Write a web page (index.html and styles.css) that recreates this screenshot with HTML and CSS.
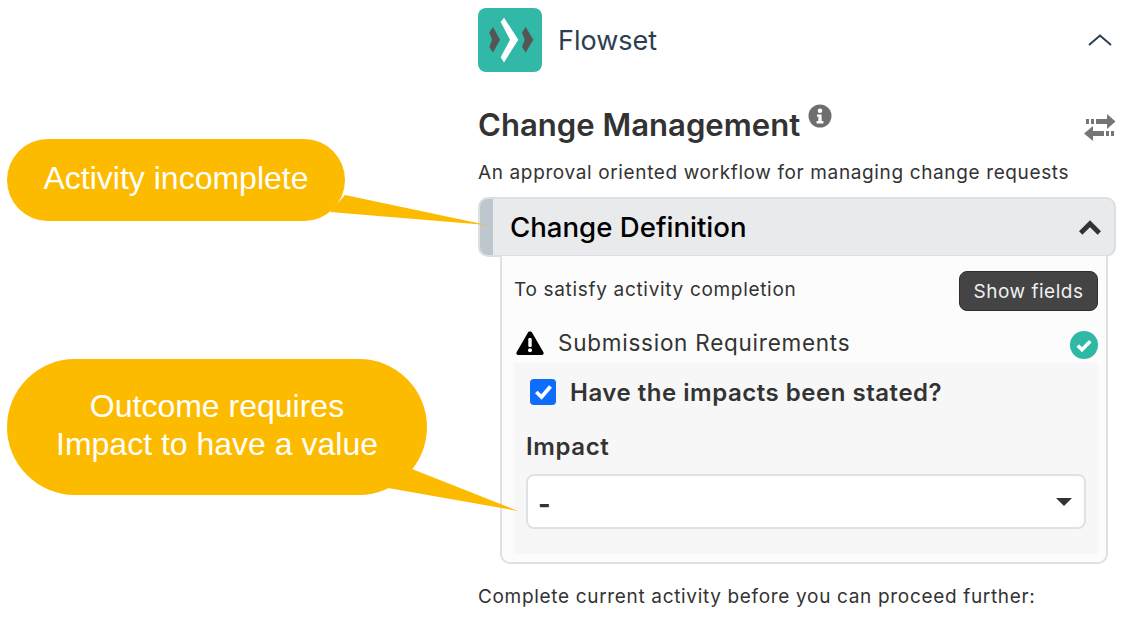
FILE: index.html
```html
<!DOCTYPE html>
<html lang="en">
<head>
<meta charset="utf-8">
<title>Flowset</title>
<link rel="stylesheet" href="styles.css">
</head>
<body>
<main class="panel">
  <header class="brand">
    <svg class="logo" viewBox="0 0 64 64" aria-hidden="true">
      <rect width="64" height="64" rx="8" fill="#31b8a6"/>
      <polygon points="15,19 22,31.700 15,44.500 11.300,39 14,31.700 11.300,24.500" fill="#555"/>
      <polygon points="22.700,14 26,9.700 40.300,31.700 26,54.500 22.700,49.300 32,31.700" fill="#fff"/>
      <polygon points="47.700,19 55.300,31.700 47.700,44.500 44,39 46.700,31.700 44,24.500" fill="#555"/>
    </svg>
    <span class="brand-name">Flowset</span>
    <svg class="collapse" viewBox="0 0 24 12" aria-hidden="true"><path d="M1 11 12 1.500 23 11" fill="none" stroke="#2c3e50" stroke-width="2"/></svg>
  </header>

  <div class="title-row">
    <h1 class="title">Change Management</h1>
    <svg class="info" viewBox="0 0 24 24" aria-hidden="true">
      <circle cx="12" cy="12" r="11.500" fill="#6e6e6e"/>
      <circle cx="12" cy="6.800" r="2.300" fill="#fff"/>
      <path d="M9 10.500h4.600v6.600H15.400v2.300H8.600v-2.300h1.800v-4.300H9z" fill="#fff"/>
    </svg>
    <svg class="swap" viewBox="0 0 32 28" aria-hidden="true">
      <g fill="#757575">
        <rect x="2" y="6" width="3" height="5"/><rect x="7" y="6" width="3" height="5"/>
        <polygon points="12,6 23,6 23,1 31.500,8.500 23,16 23,11 12,11"/>
        <polygon points="0,20.500 9,13 9,18 20,18 20,23 9,23 9,28"/>
        <rect x="22" y="18" width="3" height="5"/><rect x="27" y="18" width="3" height="5"/>
      </g>
    </svg>
  </div>
  <p class="desc">An approval oriented workflow for managing change requests</p>

  <div class="activity-head">
    <span class="activity-band"></span>
    <h2 class="activity-name">Change Definition</h2>
    <svg class="activity-toggle" viewBox="0 0 22 15" aria-hidden="true"><path d="M1.700 13 11 3.700 20.300 13" fill="none" stroke="#333" stroke-width="4.800"/></svg>
  </div>

  <section class="activity-body">
    <div class="satisfy-row">
      <span>To satisfy activity completion</span>
      <button class="show-fields" type="button">Show fields</button>
    </div>
    <div class="req-row">
      <svg class="warn" viewBox="0 0 28 24" aria-hidden="true">
        <path d="M14 .5c1 0 1.800.5 2.300 1.400l11 19.200c.9 1.500-.2 2.900-1.800 2.900H2.500C.9 24-.2 22.600.7 21.100l11-19.200C12.200 1 13 .5 14 .5z" fill="#000"/>
        <rect x="12.300" y="7" width="3.400" height="9" rx="1" fill="#fff"/>
        <circle cx="14" cy="19.300" r="2" fill="#fff"/>
      </svg>
      <span class="req-name">Submission Requirements</span>
      <svg class="ok" viewBox="0 0 28 28" aria-hidden="true">
        <circle cx="14" cy="14" r="14" fill="#2fb8a6"/>
        <path d="M7.800 14.500l4.200 4.200 8.300-8.400" fill="none" stroke="#fff" stroke-width="3.600"/>
      </svg>
    </div>
    <div class="fields">
      <label class="check-row">
        <span class="checkbox"><svg viewBox="0 0 26 26" aria-hidden="true"><path d="M6.300 13 11.500 18 20.500 7.500" fill="none" stroke="#fff" stroke-width="3.800"/></svg></span>
        <span class="check-text">Have the impacts been stated?</span>
      </label>
      <div class="field-label">Impact</div>
      <div class="select">
        <span class="select-value">-</span>
        <span class="caret"></span>
      </div>
    </div>
  </section>

  <p class="footnote">Complete current activity before you can proceed further:</p>
</main>

<aside class="callout callout-one">
  <svg class="tail tail-one" viewBox="0 0 170 40" aria-hidden="true"><polygon points="15,0 157,30 0,17" fill="#fdbb00"/></svg>
  <span>Activity incomplete</span>
</aside>
<aside class="callout callout-two">
  <svg class="tail tail-two" viewBox="0 0 140 50" aria-hidden="true"><polygon points="24,0 130,42 0,19" fill="#fdbb00"/></svg>
  <span>Outcome requires<br>Impact to have a value</span>
</aside>
</body>
</html>
```
FILE: styles.css
```css
* { box-sizing: border-box; }
html, body { margin: 0; height: 100%; background: #fff; overflow: hidden; }
body { font-family: Inter, "Liberation Sans", sans-serif; color: #333; position: relative; }

.panel { margin-left: 478px; width: 638px; padding-top: 8px; }

.brand { display: flex; align-items: center; height: 64px; }
.logo { width: 64px; height: 64px; flex: none; }
.brand-name { margin-left: 16px; font-size: 27px; color: #2c3e50; }
.collapse { width: 24px; height: 12px; margin-left: auto; margin-right: 4px; }

.title-row { display: flex; align-items: flex-start; margin-top: 30px; height: 44px; }
.title { margin: 1px 0 0; font-size: 31.100px; font-weight: 600; line-height: 44px; color: #333; }
.info { width: 24px; height: 24px; margin: 2px 0 0 8px; }
.swap { width: 32px; height: 28px; margin: 11px 0 0 auto; }

.desc { margin: 13px 0 0; font-size: 19px; line-height: 28px; color: #333; letter-spacing: .63px; }

.activity-head { display: flex; align-items: center; height: 60px; margin-top: 10px; background: #e9eaec; border: 2px solid #dcdfe3; border-radius: 10px; overflow: hidden; }
.activity-band { width: 13px; align-self: stretch; background: #bfc7ce; }
.activity-name { margin: 0 0 0 17px; font-size: 27.600px; font-weight: 500; color: #000; }
.activity-toggle { width: 22px; height: 15px; margin-left: auto; margin-right: 13px; }

.activity-body { margin: -1px 8px 0 22px; padding: 15px 8px 8px 12px; height: 308px; background: #fcfcfc; border: 2px solid #dee2e6; border-top: 0; border-radius: 0 0 10px 10px; }
.satisfy-row { display: flex; align-items: center; justify-content: space-between; height: 40px; font-size: 19px; letter-spacing: .68px; }
.satisfy-row span { margin-top: -3px; }
.show-fields { height: 40px; width: 139px; padding: 0; background: #444; color: #f0f0f0; border: 1px solid #2e2e2e; border-radius: 8px; font: 400 19px Inter, "Liberation Sans", sans-serif; letter-spacing: .5px; }

.req-row { display: flex; align-items: center; height: 28px; margin-top: 20px; }
.warn { width: 28px; height: 24px; margin-left: 2px; margin-top: -4px; }
.req-name { margin-left: 14px; font-size: 22.500px; letter-spacing: .75px; margin-top: -6px; }
.ok { width: 28px; height: 28px; margin-left: auto; }

.fields { margin-top: 4px; height: 191px; background: #f7f7f7; padding: 16px 12px 0 12px; }
.check-row { display: flex; align-items: center; height: 26px; margin-left: 4px; }
.checkbox { width: 26px; height: 26px; background: #0d6efd; border-radius: 4px; flex: none; }
.checkbox svg { display: block; width: 26px; height: 26px; }
.check-text { margin-left: 14px; font-size: 24px; font-weight: 600; letter-spacing: .52px; }
.field-label { margin-top: 27px; font-size: 24px; font-weight: 600; letter-spacing: .6px; line-height: 30px; }
.select { display: flex; align-items: center; justify-content: space-between; height: 55px; margin-top: 12px; padding: 0 12px 0 10px; background: #fff; border: 2px solid #dee2e6; border-radius: 8px; font-size: 24px; }
.select-value { font-weight: 700; font-size: 27px; padding-top: 5px; }
.caret { width: 0; height: 0; border-left: 8.500px solid transparent; border-right: 8.500px solid transparent; border-top: 8px solid #333; }

.footnote { margin: 19px 0 0; font-size: 19px; line-height: 28px; color: #333; letter-spacing: .67px; }

.callout { position: absolute; display: flex; align-items: center; justify-content: center; background: #fdbb00; color: #fff; font-family: "Liberation Sans", Arial, sans-serif; font-size: 32px; line-height: 38px; text-align: center; padding-bottom: 4px; }
.callout span { position: relative; }
.callout-one { left: 7px; top: 139px; width: 338px; height: 82px; border-radius: 41px; }
.callout-two { left: 7px; top: 359px; width: 420px; height: 136px; border-radius: 68px; }
.tail { position: absolute; }
.tail-one { left: 323px; top: 56px; width: 170px; height: 40px; }
.tail-two { left: 380.500px; top: 110px; width: 140px; height: 50px; }
```
